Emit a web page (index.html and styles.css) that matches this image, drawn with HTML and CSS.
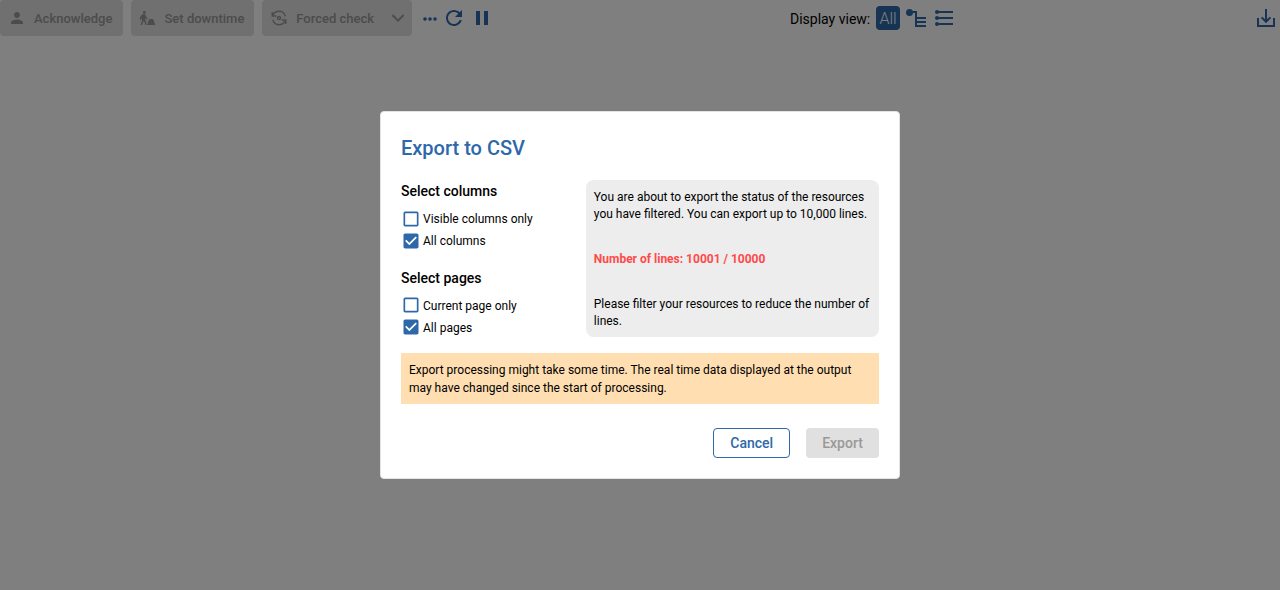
FILE: index.html
```html
<!DOCTYPE html>
<html lang="en">
<head>
<meta charset="utf-8">
<title>Export to CSV</title>
<link rel="stylesheet" href="styles.css">
</head>
<body>
<header class="toolbar">
  <div class="actions">
    <button class="action ack" disabled>
      <svg class="icon18" viewBox="0 0 24 24"><path d="M12 12c2.210 0 4-1.790 4-4s-1.790-4-4-4-4 1.790-4 4 1.790 4 4 4zm0 2c-2.670 0-8 1.340-8 4v2h16v-2c0-2.660-5.330-4-8-4z"/></svg>
      <span>Acknowledge</span>
    </button>
    <button class="action down" disabled>
      <svg class="icon18" viewBox="0 0 18 18"><circle cx="5.300" cy="2.500" r="1.400"/><path d="M3.200 4.300h3l1 2.300 1.600 2.400-.7.600-1.800-1.700v1.900l.9 2L7.500 15H6.100l-.5-3-1-1.300-.5 1.900L2.900 15H1.500l1.300-3.400.2-3-.8-.2v1.300l-1.200.2-.2-2.300z"/><path d="M8 15l2-5.400 1-.6h2.300l1 .6L16.400 15z"/></svg>
      <span>Set downtime</span>
    </button>
    <button class="action check" disabled>
      <svg class="icon18 line" viewBox="0 0 18 18"><path d="M2.300 3v4h4M2.500 6.800C3.800 4 6.100 2.300 9 2.300c3.200 0 5.500 2 6.200 5M15.700 15v-4h-4M15.500 11.200c-1.300 2.800-3.600 4.500-6.500 4.500-3.200 0-5.500-2-6.200-5"/><circle cx="9" cy="9" r="1.500"/></svg>
      <span>Forced check</span>
      <svg class="chevron" viewBox="0 0 14 10"><path d="M1.400 2l5.600 5.600L12.600 2"/></svg>
    </button>
  </div>
  <div class="tools">
    <svg class="dots" viewBox="0 0 14 4"><circle cx="2" cy="2" r="1.800"/><circle cx="7" cy="2" r="1.800"/><circle cx="12" cy="2" r="1.800"/></svg>
    <svg class="icon24" viewBox="0 0 24 24"><path d="M17.650 6.350C16.200 4.900 14.210 4 12 4c-4.420 0-7.990 3.580-7.990 8s3.570 8 7.990 8c3.730 0 6.840-2.550 7.730-6h-2.080c-.82 2.330-3.040 4-5.650 4-3.310 0-6-2.690-6-6s2.690-6 6-6c1.660 0 3.140.69 4.220 1.780L13 11h7V4l-2.350 2.350z"/></svg>
    <svg class="icon24 pause" viewBox="0 0 24 24"><path d="M6 19h4V5H6v14zm8-14v14h4V5h-4z"/></svg>
  </div>
  <div class="views">
    <span class="view-label">Display view:</span>
    <span class="view-all">All</span>
    <svg class="icon24 tree" viewBox="0 0 24 24"><circle cx="5.500" cy="6.500" r="3.500"/><path d="M5 6h7v14h10M12 12h10M12 16h10"/></svg>
    <svg class="icon24 list" viewBox="0 0 24 24"><circle cx="5" cy="6" r="2"/><circle cx="5" cy="12" r="2"/><circle cx="5" cy="18" r="2"/><path d="M5 6h16M5 12h16M5 18h16"/></svg>
  </div>
  <svg class="download" viewBox="0 0 20 20"><path d="M2 9v8.100h16V9M10 0v13M5.600 8.400L10 12.800l4.400-4.400"/></svg>
</header>

<div class="backdrop">
  <section class="dialog" role="dialog" aria-modal="true">
    <h2 class="title">Export to CSV</h2>
    <div class="content">
      <div class="options">
        <h3 class="group-title">Select columns</h3>
        <div class="option"><svg class="box" viewBox="0 0 24 24"><path d="M19 5v14H5V5h14m0-2H5c-1.100 0-2 .9-2 2v14c0 1.100.9 2 2 2h14c1.100 0 2-.9 2-2V5c0-1.100-.9-2-2-2z"/></svg>Visible columns only</div>
        <div class="option"><svg class="box" viewBox="0 0 24 24"><path d="M19 3H5c-1.110 0-2 .9-2 2v14c0 1.100.89 2 2 2h14c1.110 0 2-.9 2-2V5c0-1.100-.89-2-2-2zm-9 14l-5-5 1.410-1.410L10 14.170l7.590-7.590L19 8l-9 9z"/></svg>All columns</div>
        <h3 class="group-title second">Select pages</h3>
        <div class="option"><svg class="box raised" viewBox="0 0 24 24"><path d="M19 5v14H5V5h14m0-2H5c-1.100 0-2 .9-2 2v14c0 1.100.9 2 2 2h14c1.100 0 2-.9 2-2V5c0-1.100-.9-2-2-2z"/></svg>Current page only</div>
        <div class="option"><svg class="box raised" viewBox="0 0 24 24"><path d="M19 3H5c-1.110 0-2 .9-2 2v14c0 1.100.89 2 2 2h14c1.110 0 2-.9 2-2V5c0-1.100-.89-2-2-2zm-9 14l-5-5 1.410-1.410L10 14.170l7.590-7.590L19 8l-9 9z"/></svg>All pages</div>
      </div>
      <div class="info">
        <p>You are about to export the status of the resources you have filtered. You can export up to 10,000 lines.</p>
        <p class="count">Number of lines: 10001 / 10000</p>
        <p>Please filter your resources to reduce the number of lines.</p>
      </div>
    </div>
    <p class="warning">Export processing might take some time. The real time data displayed at the output may have changed since the start of processing.</p>
    <div class="buttons">
      <button class="btn cancel">Cancel</button>
      <button class="btn export" disabled>Export</button>
    </div>
  </section>
</div>
</body>
</html>
```
FILE: styles.css
```css
* { box-sizing: border-box; }
body {
  margin: 0;
  height: 590px;
  overflow: hidden;
  background: #fff;
  color: #000;
  font-family: Roboto, "Liberation Sans", sans-serif;
}
button { font-family: inherit; }
svg { display: block; flex: none; fill: currentColor; }
h2, h3, p { margin: 0; }

.toolbar { display: flex; align-items: center; height: 36px; color: #2e68aa; }
.actions { display: flex; gap: 8px; }
.action {
  display: flex;
  align-items: center;
  height: 36px;
  padding: 0 0 0 8px;
  border: 0;
  border-radius: 4px;
  background: #e0e0e0;
  color: #999;
  font-size: 13px;
  font-weight: 500;
}
.ack { width: 123px; }
.down { width: 123px; }
.check { width: 150px; }
.action span { margin-left: 8px; white-space: nowrap; }
.down span { margin-left: 7.500px; }
.check span { margin-left: 8.300px; }
.icon18 { width: 18px; height: 18px; }
.down .icon18 { margin-bottom: -2px; }
.line { fill: none; stroke: currentColor; stroke-width: 1.5; }
.chevron { width: 14px; height: 10px; margin-left: auto; margin-right: 7px; fill: none; stroke: currentColor; stroke-width: 2; }

.tools { display: flex; align-items: center; margin-left: 11px; }
.dots { width: 14px; height: 4px; margin-right: 5px; margin-top: 2px; }
.icon24 { width: 24px; height: 24px; }
.pause { margin-left: 4px; }
.views { display: flex; align-items: center; gap: 4px; margin-left: 296px; }
.view-label { width: 82px; padding-top: 1px; color: #000; font-size: 14px; white-space: nowrap; }
.view-all {
  width: 24px;
  height: 24px;
  border-radius: 4px;
  background: #2e68aa;
  color: #fff;
  font-size: 16px;
  font-weight: 300;
  line-height: 25px;
  text-align: center;
}
.tree, .list { stroke: currentColor; stroke-width: 2; }
.tree path, .list path { fill: none; }
.tree circle, .list circle { stroke: none; }
.download { width: 20px; height: 20px; margin: 2px 4px 0 auto; fill: none; stroke: currentColor; stroke-width: 2; }

.backdrop {
  position: fixed;
  inset: 0;
  display: flex;
  align-items: center;
  justify-content: center;
  background: rgba(0, 0, 0, 0.5);
}
.dialog {
  width: 520px;
  height: 368px;
  padding: 20px;
  border: 1px solid #e3e3e3;
  border-radius: 4px;
  background: #fff;
}
.title { color: #2e68aa; font-size: 20px; font-weight: 500; line-height: 32px; }
.content { display: flex; justify-content: space-between; height: 157px; margin-top: 16px; }
.group-title { font-size: 14px; font-weight: 500; line-height: 22px; margin-bottom: 6px; }
.second { margin-top: 15px; }
.option { display: flex; align-items: center; gap: 2px; height: 22px; font-size: 12px; }
.box { width: 20px; height: 20px; color: #2e68aa; }
.raised { margin-bottom: 2px; }
.info {
  display: flex;
  flex-direction: column;
  gap: 28px;
  width: 293px;
  padding: 9px 8px 0 7.800px;
  border-radius: 8px;
  background: #ededed;
  font-size: 12px;
  line-height: 17px;
}
.count { color: #ff4a4a; font-weight: 700; }
.warning {
  height: 51px;
  margin-top: 16px;
  padding: 8px;
  background: #ffdfb2;
  font-size: 12px;
  line-height: 18px;
}
.buttons { display: flex; justify-content: flex-end; gap: 16px; margin-top: 24px; }
.btn { height: 30px; padding: 0; border-radius: 4px; font-size: 14px; font-weight: 500; }
.cancel { width: 77px; padding-left: 0.500px; border: 1px solid #2e68aa; background: #fff; color: #2e68aa; }
.export { width: 73px; border: 0; background: #e0e0e0; color: #999; }
```
